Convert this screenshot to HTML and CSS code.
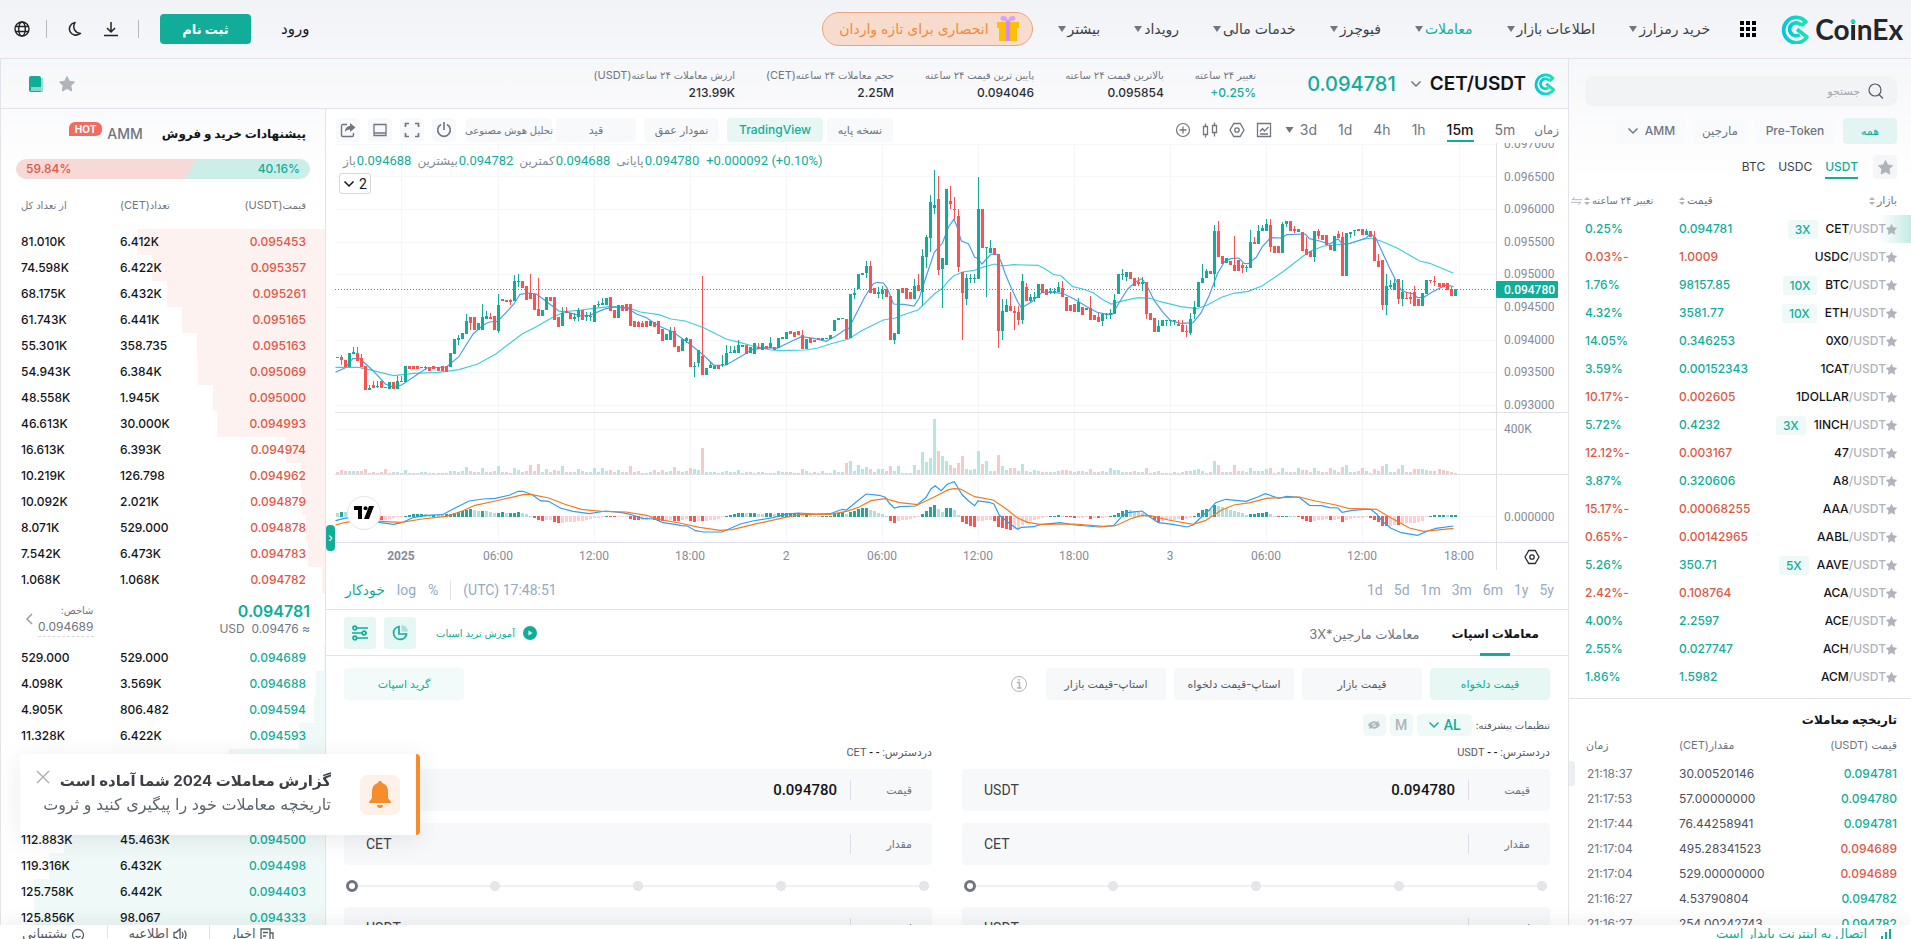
FILE: index.html
```html
<!DOCTYPE html>
<html lang="fa" dir="rtl">
<head>
<meta charset="utf-8">
<title>CET/USDT | CoinEx</title>
<link rel="stylesheet" href="styles.css">
</head>
<body>
<svg class="defs" aria-hidden="true">
  <defs>
    <linearGradient id="brand" x1="0" x2="1"><stop offset="0" stop-color="#00c8dc"/><stop offset="1" stop-color="#1fe0b4"/></linearGradient>
    <symbol id="coin" viewBox="0 0 28 28"><g fill="none" stroke="url(#brand)" stroke-width="3.6" stroke-linejoin="round"><path d="M15.500 13.800 25 21.200A12.200 12.200 0 1 1 24 6.600L19.500 10.300"/><path d="M19.800 10.200A6.300 6.300 0 1 0 18.200 19"/></g></symbol>
    <symbol id="caret" viewBox="0 0 8 6"><path d="M0 0h8L4 6z" fill="currentColor"/></symbol>
    <symbol id="chev" viewBox="0 0 12 8"><path d="M1.500 1.500 6 6l4.500-4.500" fill="none" stroke="currentColor" stroke-width="1.500"/></symbol>
    <symbol id="star" viewBox="0 0 16 16"><path d="M8 .5l2.300 4.700 5.200.8-3.700 3.700.9 5.300L8 12.500 3.300 15l.9-5.300L.5 6l5.200-.8z" fill="currentColor" stroke="currentColor" stroke-linejoin="round"/></symbol>
    <symbol id="sort" viewBox="0 0 6 10"><path d="M0 4h6L3 1zM0 6h6L3 9z" fill="currentColor"/></symbol>
    <symbol id="nut" viewBox="0 0 16 16"><path d="M4.800 1.500h6.400L15 8l-3.800 6.500H4.800L1 8z" fill="none" stroke="currentColor" stroke-width="1.300"/><circle cx="8" cy="8" r="2.200" fill="none" stroke="currentColor" stroke-width="1.300"/></symbol>
  </defs>
</svg>

<header class="top">
  <a class="brand" href="#" dir="ltr"><svg class="brand-mark"><use href="#coin"/></svg><span class="brand-name">Co<b>i</b>nEx</span></a>
  <button class="plain apps" aria-label="برنامه‌ها"><svg width="16" height="16" viewBox="0 0 16 16"><path d="M0 0h4v4H0zM6 0h4v4H6zM12 0h4v4h-4zM0 6h4v4H0zM6 6h4v4H6zM12 6h4v4h-4zM0 12h4v4H0zM6 12h4v4H6zM12 12h4v4h-4z"/></svg></button>
  <nav class="nav">
    <a href="#">خرید رمزارز<svg><use href="#caret"/></svg></a>
    <a href="#">اطلاعات بازار<svg><use href="#caret"/></svg></a>
    <a href="#" class="on">معاملات<svg><use href="#caret"/></svg></a>
    <a href="#">فیوچرز<svg><use href="#caret"/></svg></a>
    <a href="#">خدمات مالی<svg><use href="#caret"/></svg></a>
    <a href="#">رویداد<svg><use href="#caret"/></svg></a>
    <a href="#">بیشتر<svg><use href="#caret"/></svg></a>
  </nav>
  <a class="promo" href="#"><svg width="24" height="28" viewBox="0 0 24 28"><path d="M1 7h22v6H1zM3 13h18v13H3z" fill="#fbbf05"/><path d="M10 6h4v20h-4z" fill="#d08af5"/><path d="M12 6C7 7 3 5 5 2s7 0 7 4c0-4 5-7 7-4s-2 5-7 4z" fill="#d9a2f8"/></svg>انحصاری برای تازه واردان</a>
  <div class="account">
    <a class="login" href="#">ورود</a>
    <button class="signup">ثبت نام</button>
    <i class="bar"></i>
    <button class="plain dl" aria-label="دانلود"><svg width="14" height="16" viewBox="0 0 14 16"><path d="M7 1v10M3 7l4 4 4-4M0 14.500h14" fill="none" stroke="#222" stroke-width="1.500"/></svg></button>
    <button class="plain moon" aria-label="حالت شب"><svg width="14" height="16" viewBox="0 0 14 16"><path d="M7 1.500C2 2.500.5 7 2 10.500s6.500 5 10.500 2C7 12 4 7 7 1.500z" fill="none" stroke="#222" stroke-width="1.500" stroke-linejoin="round"/></svg></button>
    <i class="bar"></i>
    <button class="plain" aria-label="زبان"><svg width="16" height="16" viewBox="0 0 16 16" fill="none" stroke="#222" stroke-width="1.400"><circle cx="8" cy="8" r="7"/><ellipse cx="8" cy="8" rx="3.300" ry="7"/><path d="M1.500 5.500h13M1.500 10.500h13"/></svg></button>
  </div>
</header>

<main class="board">
  <aside class="markets">
    <label class="search"><svg width="16" height="16" viewBox="0 0 16 16" fill="none" stroke="#555b66" stroke-width="1.200"><circle cx="7" cy="7" r="6"/><path d="M11 11.500l4 4"/></svg><input type="text" placeholder="جستجو" aria-label="جستجو"></label>
    <div class="chips">
      <button class="chip on w54">همه</button>
      <button class="chip w80">Pre-Token</button>
      <button class="chip w54">مارجین</button>
      <button class="chip w68">AMM<svg class="chev"><use href="#chev"/></svg></button>
    </div>
    <div class="quotes">
      <button class="fav" aria-label="نشان‌شده‌ها"><svg><use href="#star"/></svg></button>
      <a href="#" class="on">USDT</a><a href="#">USDC</a><a href="#">BTC</a>
    </div>
    <table class="pairs">
      <colgroup><col><col class="c-price"><col class="c-last"></colgroup>
      <thead><tr><th>بازار<svg><use href="#sort"/></svg></th><th>قیمت<svg><use href="#sort"/></svg></th><th>تغییر ۲۴ ساعته<svg><use href="#sort"/></svg><svg class="swap" viewBox="0 0 12 8"><path d="M12 2.500H1M1 2.500 4 0M0 5.500h11M11 5.500 8 8" fill="none" stroke="currentColor"/></svg></th></tr></thead>
      <tbody id="pairs"></tbody>
    </table>
    <section class="history">
      <h2>تاریخچه معاملات</h2>
      <table>
        <colgroup><col><col class="c-price"><col class="c-last"></colgroup>
        <thead><tr><th>قیمت <bdi>(USDT)</bdi></th><th>مقدار<bdi>(CET)</bdi></th><th>زمان</th></tr></thead>
        <tbody id="trades"></tbody>
      </table>
    </section>
    <button class="grip" aria-label="جمع کردن"></button>
  </aside>

  <div class="ticker">
    <svg class="pair-mark"><use href="#coin"/></svg>
    <h1>CET/USDT</h1>
    <svg class="chev lg"><use href="#chev"/></svg>
    <strong class="last">0.094781</strong>
    <dl class="stats">
      <div><dt>تغییر ۲۴ ساعته</dt><dd class="up" dir="ltr">+0.25%</dd></div>
      <div><dt>بالاترین قیمت ۲۴ ساعته</dt><dd>0.095854</dd></div>
      <div><dt>پایین ترین قیمت ۲۴ ساعته</dt><dd>0.094046</dd></div>
      <div><dt>حجم معاملات ۲۴ ساعته<bdi>(CET)</bdi></dt><dd>2.25M</dd></div>
      <div><dt>ارزش معاملات ۲۴ ساعته<bdi>(USDT)</bdi></dt><dd>213.99K</dd></div>
    </dl>
    <div class="marks">
      <svg class="star"><use href="#star"/></svg>
      <svg width="14" height="16" viewBox="0 0 14 16"><path d="M4 2h10v14H4z" fill="#8fe0d8"/><path d="M2 0h8a2 2 0 0 1 2 2v14H2a2 2 0 0 1-2-2V2a2 2 0 0 1 2-2z" fill="#11ad98"/><path d="M2 12h10M2 14h10" stroke="#fff"/></svg>
    </div>
  </div>

  <section class="center">
    <div class="tools">
      <span class="cap">زمان</span>
      <div class="frames"><a href="#">5m</a><a href="#" class="on">15m</a><a href="#">1h</a><a href="#">4h</a><a href="#">1d</a><a href="#">3d</a><svg class="tri"><use href="#caret"/></svg></div>
      <div class="glyphs">
        <svg viewBox="0 0 16 16"><path d="M1.500 1.500h13v13h-13zM4 9.500l2.500-3 2 2.500L12.500 5M4 12h8" fill="none" stroke="currentColor" stroke-width="1.300"/></svg>
        <svg><use href="#nut"/></svg>
        <svg viewBox="0 0 16 16"><path d="M1.500 4.500h4v8h-4zM3.500 1.500v3M3.500 12.500v3M10.500 3.500h4v7h-4zM12.500.5v3M12.500 10.500v4" fill="none" stroke="currentColor" stroke-width="1.300"/></svg>
        <svg viewBox="0 0 16 16"><circle cx="8" cy="8" r="6.500" fill="none" stroke="currentColor" stroke-width="1.200"/><path d="M8 4.500v7M4.500 8h7" stroke="currentColor" stroke-width="1.300"/></svg>
      </div>
      <div class="modes">
        <div class="duo"><button class="mode w66">نسخه پایه</button><button class="mode on w96">TradingView</button></div>
        <button class="mode w75">نمودار عمق</button>
        <div class="duo"><button class="mode w80">قید</button><button class="mode w86">تحلیل هوش مصنوعی</button></div>
        <button class="mode sq" aria-label="خاموش"><svg viewBox="0 0 16 16"><path d="M5 2.500a6.300 6.300 0 1 0 6 0M8 0v8" fill="none" stroke="currentColor" stroke-width="1.600"/></svg></button>
        <button class="mode sq" aria-label="تمام صفحه"><svg viewBox="0 0 16 16"><path d="M1.500 5V1.500H5M11 1.500h3.500V5M14.500 11v3.500H11M5 14.500H1.500V11" fill="none" stroke="currentColor" stroke-width="1.700"/></svg></button>
        <button class="mode sq" aria-label="چیدمان"><svg viewBox="0 0 16 16"><path d="M2 2.500h12v11H2zM2 11h12" fill="none" stroke="currentColor" stroke-width="1.300"/></svg></button>
        <button class="mode sq" aria-label="اشتراک"><svg viewBox="0 0 16 16"><path d="M7 2.500H3a1.500 1.500 0 0 0-1.500 1.500v9A1.500 1.500 0 0 0 3 14.500h9a1.500 1.500 0 0 0 1.500-1.500v-2" fill="none" stroke="currentColor" stroke-width="1.400"/><path d="M10 1l5.500 4.500L10 10V7.500C7.500 7.500 6 8.500 5 10c0-3.500 2-6 5-6z" fill="currentColor"/></svg></button>
      </div>
    </div>

    <div class="chart" dir="ltr">
      <svg id="chart" viewBox="0 0 1233 427" role="img" aria-label="نمودار CET/USDT"></svg>
      <div class="legend"><span>باز<b>0.094688</b></span><span>بیشترین<b>0.094782</b></span><span>کمترین<b>0.094688</b></span><span>پایانی<b>0.094780</b></span><b>+0.000092 (+0.10%)</b></div>
      <button class="fold"><svg class="chev"><use href="#chev"/></svg>2</button>
      <div class="tv"><svg width="20" height="14" viewBox="0 0 20 14"><path d="M0 0h8v13H4V4H0zM15 0h5l-5 13h-5z"/><circle cx="11.500" cy="2.200" r="2"/></svg></div>
      <button class="drawer" aria-label="باز کردن">›</button>
    </div>
    <div class="chart-foot" dir="ltr">
      <div class="scale"><a href="#" class="on">خودکار</a><a href="#">log</a><a href="#">%</a><time>(UTC) 17:48:51</time></div>
      <div class="ranges"><a href="#">1d</a><a href="#">5d</a><a href="#">1m</a><a href="#">3m</a><a href="#">6m</a><a href="#">1y</a><a href="#">5y</a></div>
    </div>

    <div class="trade-tabs">
      <a href="#" class="on">معاملات اسپات</a><a href="#">معاملات مارجین*3X</a>
      <div class="trade-side">
        <a class="learn" href="#"><svg width="14" height="14" viewBox="0 0 14 14"><circle cx="7" cy="7" r="7" fill="#11ad98"/><path d="M5.500 4.500v5L9.500 7z" fill="#fff"/></svg>آموزش ترید اسپات</a>
        <button class="tile" aria-label="نمودار"><svg viewBox="0 0 16 16"><path d="M7 1.500a6.500 6.500 0 1 0 7.500 7.500H7z" fill="none" stroke="#11ad98" stroke-width="1.700"/><path d="M9.500 0A6.500 6.500 0 0 1 16 6.500H9.500z" fill="#a9e0d8"/></svg></button>
        <button class="tile" aria-label="تنظیمات"><svg viewBox="0 0 16 16" fill="none" stroke="#11ad98" stroke-width="1.700"><circle cx="2.800" cy="3" r="1.800"/><path d="M4.500 3H16M0 8h10M13.500 8H15M4.500 13H16"/><circle cx="12" cy="8" r="1.800"/><circle cx="2.800" cy="13" r="1.800"/></svg></button>
      </div>
    </div>

    <div class="orders">
      <div class="kinds">
        <button class="kind on">قیمت دلخواه</button><button class="kind">قیمت بازار</button><button class="kind">استاپ-قیمت دلخواه</button><button class="kind">استاپ-قیمت بازار</button>
        <svg class="info" viewBox="0 0 18 18"><circle cx="9" cy="9" r="7.500" fill="none" stroke="currentColor"/><path d="M7 7.500h2.500V13M7 13h4.500M9 4v1.800" fill="none" stroke="currentColor" stroke-width="1.500"/></svg>
        <button class="kind grid-bot">گرید اسپات</button>
      </div>
      <div class="adv"><span>تنظیمات پیشرفته:</span><button class="al">AL<svg class="chev"><use href="#chev"/></svg></button><button class="sm">M</button><button class="sm" aria-label="پنهان"><svg width="12" height="10" viewBox="0 0 12 10"><path d="M0 5c3-5 9-5 12 0-3 5-9 5-12 0z" fill="#b3b7be"/><circle cx="6" cy="5" r="2" fill="#effaf8"/><path d="M1 8.500 11 1.500" stroke="#b3b7be" stroke-width="1.300"/></svg></button></div>
      <div class="forms">
        <form>
          <p>دردسترس: <b>- -</b> USDT</p>
          <div class="field"><label for="bp">قیمت</label><input id="bp" type="text" value="0.094780"><em>USDT</em></div>
          <div class="field"><label for="bq">مقدار</label><input id="bq" type="text"><em>CET</em></div>
          <input class="slider" dir="ltr" type="range" value="0" aria-label="درصد خرید">
          <div class="field"><label for="bt">ارزش</label><input id="bt" type="text"><em>USDT</em></div>
        </form>
        <form>
          <p>دردسترس: <b>- -</b> CET</p>
          <div class="field"><label for="sp">قیمت</label><input id="sp" type="text" value="0.094780"><em>USDT</em></div>
          <div class="field"><label for="sq">مقدار</label><input id="sq" type="text"><em>CET</em></div>
          <input class="slider" dir="ltr" type="range" value="0" aria-label="درصد فروش">
          <div class="field"><label for="st">ارزش</label><input id="st" type="text"><em>USDT</em></div>
        </form>
      </div>
    </div>
  </section>

  <aside class="book">
    <div class="book-tabs"><a href="#" class="on">پیشنهادات خرید و فروش</a><a href="#">AMM</a><span class="hot">HOT</span></div>
    <div class="ratio" dir="ltr"><span>59.84%</span><span>40.16%</span></div>
    <table class="asks">
      <colgroup><col><col class="b-amt"><col class="b-sum"></colgroup>
      <thead><tr><th>قیمت<bdi>(USDT)</bdi></th><th>تعداد<bdi>(CET)</bdi></th><th>از تعداد کل</th></tr></thead>
      <tbody id="asks"></tbody>
    </table>
    <div class="mid">
      <div class="mid-price"><strong>0.094781</strong><small>≈ 0.09476&nbsp; USD</small></div>
      <div class="mid-index"><small>شاخص:</small><u>0.094689</u></div>
      <svg width="8" height="12" viewBox="0 0 8 12"><path d="M7 1 2 6l5 5" fill="none" stroke="#9a9ea8" stroke-width="1.500"/></svg>
    </div>
    <table class="bids">
      <colgroup><col><col class="b-amt"><col class="b-sum"></colgroup>
      <tbody id="bids"></tbody>
    </table>
  </aside>
</main>

<footer class="status">
  <span class="net"><svg width="14" height="14" viewBox="0 0 14 14"><path d="M0 10h2v4H0zM4 7h2v7H4zM8 3h2v11H8zM12 0h2v14h-2z" fill="#11ad98"/></svg>اتصال به اینترنت پایدار است</span>
  <nav>
    <a href="#"><svg viewBox="0 0 14 14"><path d="M1 1h9v12H1zM10 5h3v8h-4M3 4.500h5M3 8h3" fill="none" stroke="currentColor" stroke-width="1.300"/></svg>اخبار</a>
    <a href="#"><svg viewBox="0 0 14 14"><path d="M1 4.500h2L7 1v12L3 9.500H1zM9 4q2 3 0 6M11.500 2.500q3 4.500 0 9" fill="none" stroke="currentColor" stroke-width="1.300"/></svg>اطلاعیه</a>
    <a href="#"><svg viewBox="0 0 14 14"><circle cx="7" cy="7" r="5.500" fill="none" stroke="currentColor" stroke-width="1.300"/><path d="M4.500 8q2.500 2.500 5 0" fill="none" stroke="currentColor" stroke-width="1.300"/></svg>پشتیبانی</a>
  </nav>
</footer>

<div class="toast" role="status">
  <div class="bell"><svg width="24" height="27" viewBox="0 0 24 27"><path d="M12 0a2 2 0 0 1 2 2c4 1 6 4 6 9v6l3 4v1H1v-1l3-4v-6c0-5 2-8 6-9a2 2 0 0 1 2-2zM9 24h6a3 3 0 0 1-6 0z" fill="#f78c2d"/></svg></div>
  <div class="toast-text"><h3>گزارش معاملات 2024 شما آماده است</h3><p>تاریخچه معاملات خود را پیگیری کنید و ثروت</p></div>
  <button class="plain close" aria-label="بستن"><svg width="14" height="14" viewBox="0 0 14 14"><path d="M1 1l12 12M13 1 1 13" stroke="#a9acb2" stroke-width="1.400"/></svg></button>
</div>
<script src="app.js"></script>
</body>
</html>
```
FILE: styles.css
```css
* { box-sizing: border-box; }
:root {
  --teal: #11ad98; --red: #de5846; --ink: #121418; --gray: #70757f; --mute: #b0b3ba; --line: #e3e4ea;
}
body {
  margin: 0; height: 100vh; overflow: hidden; display: grid; grid-template-rows: 59px 1fr 14px;
  background: linear-gradient(#f2f3f7, #fff 180px);
  font: 12px/16px Inter, "DejaVu Sans", sans-serif; color: var(--ink);
}
a { color: inherit; text-decoration: none; }
button, input { font: inherit; color: inherit; }
button { border: 0; padding: 0; background: none; cursor: pointer; }
h1, h2, h3, p, dl, dd { margin: 0; }
table { border-collapse: collapse; table-layout: fixed; width: 100%; }
th { font-weight: 400; color: var(--gray); padding: 0; text-align: right; }
td { padding: 0; }
bdi { font-size: 11px; }
.defs { position: absolute; width: 0; height: 0; }
.plain { display: flex; align-items: center; }
.chev { width: 12px; height: 8px; flex: none; }
.up { color: var(--teal); }
.down { color: var(--red); }

/* header */
.top { display: flex; align-items: center; padding: 0 8px 0 14px; border-bottom: 1px solid var(--line); }
.brand { display: flex; align-items: center; gap: 5px; }
.brand-mark { width: 29px; height: 29px; }
.brand-name { font: 700 28px/32px Lato, sans-serif; color: #23262b; }
.brand-name b { background: linear-gradient(#1fd8c0 32%, #23262b 32%); -webkit-background-clip: text; background-clip: text; color: transparent; }
.apps { margin-right: 25px; }
.nav { display: flex; gap: 34px; margin-right: 30px; font-size: 14px; line-height: 24px; color: #3c3f46; }
.nav a { display: flex; align-items: center; gap: 2px; }
.nav svg { width: 8px; height: 6px; color: #70757f; }
.nav .on { color: var(--teal); }
.promo { display: flex; align-items: center; gap: 7px; height: 34px; margin-right: 25px; padding: 0 12px 0 16px; border: 1px solid #eda47d; border-radius: 17px; background: #f7dccd; color: #f28a3c; font-size: 14px; }
.account { display: flex; align-items: center; margin-right: auto; }
.login { font-size: 15px; }
.signup { width: 91px; height: 30px; margin: 0 30px 0 21px; border-radius: 4px; background: var(--teal); color: #fff; font-weight: 700; font-size: 13px; }
.bar { width: 1px; height: 18px; background: #b5b8bf; }
.dl { margin: 0 20px 0 22px; }
.moon { margin-left: 21px; }
.account .bar:last-of-type { margin-left: 16px; }

/* frame */
.board { display: grid; grid-template-columns: 343px 1fr 326px; grid-template-rows: 50px 1fr; min-height: 0; overflow: hidden; }
.markets { grid-row: 1 / 3; grid-column: 1; position: relative; border-left: 1px solid var(--line); min-height: 0; overflow: hidden; }
.ticker { grid-column: 2 / 4; border-bottom: 1px solid var(--line); border-left: 1px solid var(--line); display: flex; align-items: center; padding: 0 12px 0 28px; }
.center { grid-column: 2; min-height: 0; min-width: 0; overflow: hidden; background: #fff; }
.book { grid-column: 3; border-left: 1px solid var(--line); border-right: 1px solid var(--line); overflow: hidden; }

/* ticker */
.pair-mark { width: 22px; height: 22px; }
.ticker h1 { font-size: 19px; font-weight: 600; line-height: 24px; margin: 0 8px; }
.chev.lg { color: #70757f; }
.last { font-size: 20px; font-weight: 500; line-height: 24px; color: var(--teal); margin-right: 14px; }
.stats { display: flex; gap: 31px; margin-right: 51px; color: var(--gray); }
.stats dt { font-size: 10px; line-height: 17px; }
.stats dd { line-height: 17px; color: #2b2e35; font-weight: 500; text-align: right; }
.stats dd.up { color: var(--teal); }
.marks { display: flex; gap: 16px; margin-right: auto; color: var(--mute); }
.star { width: 16px; height: 16px; }

/* markets */
.search { display: flex; align-items: center; gap: 6px; height: 30px; margin: 17px 14px 12px 16px; padding: 0 13px; border-radius: 8px; background: #f2f3f5; }
.search input { flex: 1; min-width: 0; border: 0; background: none; outline: 0; font-size: 11px; }
.search input::placeholder { color: #a3a7af; }
.chips { display: flex; gap: 8px; padding-right: 14px; }
.chip { height: 26px; border-radius: 4px; background: #f9fafc; color: var(--gray); font-weight: 500; font-size: 12px; display: flex; align-items: center; justify-content: center; gap: 6px; }
.chip.on { background: #e3f5f2; color: var(--teal); font-size: 11px; }
.w54 { width: 54px; } .w80 { width: 80px; } .w68 { width: 68px; } .w66 { width: 66px; } .w96 { width: 96px; } .w75 { width: 75px; } .w86 { width: 86px; }
.quotes { display: flex; gap: 13px; padding: 11px 14px 0 0; color: #3c3f46; }
.quotes a { line-height: 24px; height: 24px; }
.quotes .on { color: var(--teal); border-bottom: 2px solid; font-weight: 500; }
.fav { width: 24px; height: 24px; margin-left: 2px; border-radius: 4px; background: #f5f6f8; color: var(--mute); display: grid; place-items: center; }
.fav svg { width: 15px; height: 15px; }
.c-price { width: 118px; } .c-last { width: 110px; }
.markets th, .markets td { text-align: left; }
.markets th:first-child, .markets td:first-child { text-align: right; padding-right: 14px; }
.markets td:last-child { padding-left: 16px; }
.markets th { font-size: 11px; padding-bottom: 3px; }
.pairs { margin-top: 8px; }
.pairs th { height: 28px; white-space: nowrap; }
.pairs th svg { width: 6px; height: 10px; margin-right: 2px; color: var(--mute); vertical-align: middle; }
.pairs th .swap { width: 11px; height: 8px; }
.pairs th:last-child { padding-left: 2px; font-size: 10px; }
.pairs td { height: 28px; font-weight: 500; }
.pairs tr:first-child td:first-child { background: linear-gradient(to left, #c5ebe5, transparent 32px); }
.pair { display: flex; align-items: center; }
.pair svg { width: 11px; height: 11px; flex: none; color: var(--mute); }
.pair i { font-style: normal; color: var(--mute); }
.lev { margin-right: 8px; padding: 0 7px; line-height: 19px; border-radius: 3px; background: #eff9f7; color: var(--teal); }
.history { margin-top: 7px; border-top: 1px solid var(--line); padding-top: 10px; }
.history h2 { font-size: 12px; line-height: 22px; padding-right: 14px; }
.history th { height: 30px; }
.history th:last-child { padding-left: 17px; }
.history td { height: 25px; color: #4c5059; }
.history td:first-child { font-weight: 500; }
.history td.up { color: var(--teal); } .history td.down { color: var(--red); }
.history td:last-child { color: var(--gray); padding-left: 18px; }
.grip { position: absolute; left: 0; top: 702px; width: 6px; height: 25px; border-radius: 0 3px 3px 0; background: #eceef0; }

/* chart toolbar */
.tools { display: flex; align-items: center; height: 34px; padding: 8px 9px 0 10px; color: var(--gray); }
.cap { font-size: 12px; }
.frames { display: flex; align-items: center; gap: 21px; margin-right: 19px; font-size: 14px; }
.frames a { height: 24px; line-height: 24px; }
.frames .on { color: var(--ink); border-bottom: 2px solid var(--teal); font-weight: 500; }
.tri { width: 9px; height: 6px; margin-right: -15px; }
.glyphs { display: flex; gap: 11px; margin-right: 13px; }
.glyphs svg, .sq svg { width: 16px; height: 16px; }
.modes { display: flex; gap: 8px; margin-right: auto; }
.duo { display: flex; gap: 4px; }
.duo:nth-child(3) { margin-left: 2px; }
.mode { height: 24px; border-radius: 4px; background: #f8f9fb; font-size: 11px; white-space: nowrap; display: flex; align-items: center; justify-content: center; }
.mode.w86 { font-size: 10px; }
.mode.on { background: #e7f7f4; color: var(--teal); font-size: 12px; font-weight: 500; }
.sq { width: 24px; }

/* chart */
.chart { position: relative; padding-left: 9px; }
.chart > svg { display: block; width: 100%; height: auto; }
.chart text { font: 12px Roboto, sans-serif; fill: #868b98; }
.chart text.bold { font-weight: 700; }
.chart text.tag { fill: #fff; font-weight: 500; }
.legend { position: absolute; left: 17px; top: 9px; display: flex; gap: 6px; font: 13px/18px Roboto, "DejaVu Sans", sans-serif; color: #868b98; white-space: nowrap; }
.legend span { font-size: 12px; }
.legend b { font-weight: 400; font-size: 13px; color: var(--teal); margin-left: 1px; unicode-bidi: isolate; }
.legend span b { display: inline-block; }
.fold { position: absolute; left: 13px; top: 30px; width: 32px; height: 21px; border: 1px solid #d6d8de; border-radius: 3px; background: #fff; font: 14px Roboto, sans-serif; display: flex; align-items: center; justify-content: center; gap: 4px; }
.tv { position: absolute; left: 21px; top: 353px; width: 34px; height: 34px; border: 1px solid var(--line); border-radius: 50%; background: #fff; display: grid; place-items: center; }
.drawer { position: absolute; left: 0; top: 382px; width: 9px; height: 26px; border-radius: 4px; background: var(--teal); color: #fff; line-height: 20px; }
.chart-foot { display: flex; justify-content: space-between; align-items: center; height: 40px; padding: 0 14px 0 19px; border-bottom: 1px solid var(--line); font: 14px/20px Roboto, "DejaVu Sans", sans-serif; color: #94abc2; }
.scale { display: flex; gap: 12px; }
.ranges { display: flex; gap: 11px; }
.scale .on { color: var(--teal); }
.scale time { border-left: 1px solid var(--line); padding-left: 12px; }

/* trade panel */
.trade-tabs { display: flex; align-items: center; gap: 32px; height: 46px; padding: 0 29px 0 18px; border-bottom: 1px solid var(--line); color: var(--gray); font-size: 13px; }
.trade-tabs > a { line-height: 48px; height: 46px; }
.trade-tabs > .on { color: var(--ink); font-size: 12px; font-weight: 700; background: linear-gradient(var(--teal), var(--teal)) 50% 100% / 30px 3px no-repeat; }
.trade-side { display: flex; align-items: center; gap: 8px; margin-right: auto; }
.learn { display: flex; align-items: center; gap: 8px; margin-left: 12px; font-size: 10px; color: var(--teal); }
.tile { width: 32px; height: 32px; border-radius: 4px; background: #e7f7f4; display: grid; place-items: center; }
.tile svg { width: 16px; height: 16px; }
.orders { padding: 12px 18px 0; }
.kinds { display: flex; align-items: center; gap: 8px; }
.kind { width: 120px; height: 32px; border-radius: 4px; background: #f7f8fa; color: #555b66; font-size: 11px; }
.kind.on { background: #e7f7f4; color: var(--teal); }
.info { width: 18px; height: 18px; margin-right: 10px; color: var(--mute); }
.grid-bot { margin-right: auto; background: #f2fbf9; color: var(--teal); }
.adv { display: flex; gap: 4px; margin-top: 14px; line-height: 22px; color: #555b66; font-size: 10px; }
.al { height: 22px; width: 55px; border-radius: 4px; background: #effaf8; color: var(--teal); font: 500 14px Roboto, sans-serif; display: flex; align-items: center; justify-content: center; gap: 4px; }
.sm { width: 23px; height: 22px; border-radius: 4px; background: #effaf8; color: var(--mute); font: 500 14px Roboto, sans-serif; display: grid; place-items: center; }
.forms { display: grid; grid-template-columns: 1fr 1fr; gap: 30px; margin-top: 8px; }
.forms form { display: flex; flex-direction: column; min-width: 0; }
.forms p { margin-bottom: 7px; color: #555b66; font: 11px/18px Roboto, "DejaVu Sans", sans-serif; }
.forms p b { font-weight: 500; color: var(--ink); }
.field { display: flex; align-items: center; height: 42px; margin-bottom: 12px; padding: 0 20px 0 22px; border-radius: 4px; background: #f7f8fa; font: 15px Roboto, "DejaVu Sans", sans-serif; }
.field label { width: 61px; font-size: 11px; color: var(--gray); }
.field input { flex: 1; min-width: 0; height: 20px; border: 0; border-right: 1px solid #dcdee3; padding: 0 13px 0 0; background: none; font-weight: 500; outline: 0; }
.field em { font-style: normal; font-size: 14px; color: #3c3f46; }
.slider { appearance: none; height: 12px; margin: 3px 2px 15px; padding: 0 1px; outline: 0;
  background: radial-gradient(circle, #e4e6ea 5px, transparent 5px) 0 50% / 10px 10px no-repeat content-box,
    radial-gradient(circle, #e4e6ea 5px, transparent 5px) 25% 50% / 10px 10px no-repeat content-box,
    radial-gradient(circle, #e4e6ea 5px, transparent 5px) 50% 50% / 10px 10px no-repeat content-box,
    radial-gradient(circle, #e4e6ea 5px, transparent 5px) 75% 50% / 10px 10px no-repeat content-box,
    radial-gradient(circle, #e4e6ea 5px, transparent 5px) 100% 50% / 10px 10px no-repeat content-box,
    linear-gradient(#f0f1f4, #f0f1f4) 50% 50% / 98% 2px no-repeat; }
.slider::-webkit-slider-thumb { appearance: none; width: 12px; height: 12px; margin-left: -1px; border: 3px solid #70757f; border-radius: 50%; background: #fff; }

/* order book */
.book-tabs { display: flex; align-items: center; height: 50px; padding: 0 19px 0 0; }
.book-tabs a { font-size: 14px; font-weight: 500; color: var(--gray); }
.book-tabs .on { font-weight: 700; font-size: 12px; color: var(--ink); margin-left: 19px; }
.hot { align-self: flex-start; margin: 13px 5px 0 0; padding: 0 6px; border-radius: 6px 6px 6px 0; background: #f26b5e; color: #fff; font-size: 10px; font-weight: 700; line-height: 14px; }
.ratio { display: flex; justify-content: space-between; height: 20px; margin: 0 15px; padding: 0 10px; border-radius: 10px; line-height: 20px; font-weight: 500; background: linear-gradient(118deg, #f7dad7 59%, #cdeee8 59%); }
.ratio span:first-child { color: var(--red); } .ratio span:last-child { color: var(--teal); }
.b-amt { width: 86px; } .b-sum { width: 119px; }
.book th, .book td { text-align: left; height: 26px; }
.book th { height: 50px; font-size: 10px; padding-top: 2px; }
.book td { font-weight: 500; }
.book tr > :first-child { text-align: right; padding-right: 19px; }
.book tr > :last-child { padding-left: 20px; }
.asks td:first-child { color: var(--red); } .bids td:first-child { color: var(--teal); }
.asks tbody tr { background: linear-gradient(to left, #fef2f0 var(--depth), transparent 0); }
.bids tr { background: linear-gradient(to left, #eff9f7 var(--depth), transparent 0); }
.mid { display: flex; align-items: center; height: 52px; padding: 0 15px 0 24px; color: var(--gray); }
.mid strong { display: block; font-size: 16px; line-height: 20px; font-weight: 600; color: var(--teal); }
.mid small { display: block; font-size: 12px; line-height: 16px; }
.mid-index { margin: 0 auto 0 5px; }
.mid-index small { font-size: 10px; }
.mid-index u { display: block; line-height: 18px; text-decoration: none; border-bottom: 1px dashed #d6d8de; }

/* footer */
.status { position: relative; display: flex; align-items: flex-start; justify-content: space-between; padding: 0 20px 0 22px; background: #fff; overflow: hidden; box-shadow: 0 -4px 16px rgba(40, 50, 70, .08); color: #555b66; }
.net { display: flex; gap: 10px; color: var(--teal); font-size: 13px; }
.net svg { margin-top: 4px; }
.status nav { display: flex; font-size: 13px; }
.status nav a { display: flex; gap: 4px; }
.status nav a + a { margin-right: 20px; padding-right: 22px; border-right: 1px solid var(--line); }
.status nav svg { width: 14px; height: 14px; margin-top: 3px; }

/* notice */
.toast { position: fixed; left: 20px; bottom: 104px; width: 400px; height: 81px; display: flex; align-items: center; padding: 0 16px; background: #fff; border-right: 4px solid #f78c2d; border-radius: 4px; box-shadow: 0 4px 24px rgba(40, 50, 70, .1); }
.bell { width: 40px; height: 40px; border-radius: 8px; background: #fef1e7; display: grid; place-items: center; }
.toast-text { margin-right: 29px; padding-bottom: 4px; white-space: nowrap; color: #3c3f46; }
.toast h3 { font-size: 15px; line-height: 24px; }
.toast p { font-size: 16px; line-height: 23px; color: #60646d; }
.close { position: absolute; left: 16px; top: 16px; }
```
FILE: app.js
```js
const up = 'up', down = 'down';
const el = id => document.getElementById(id);

const pairs = [
  ['CET', '3X', '0.094781', '0.25%'], ['USDC', '', '1.0009', '-0.03%'], ['BTC', '10X', '98157.85', '1.76%'],
  ['ETH', '10X', '3581.77', '4.32%'], ['0X0', '', '0.346253', '14.05%'], ['1CAT', '', '0.00152343', '3.59%'],
  ['1DOLLAR', '', '0.002605', '-10.17%'], ['1INCH', '3X', '0.4232', '5.72%'], ['47', '', '0.003167', '-12.12%'],
  ['A8', '', '0.320606', '3.87%'], ['AAA', '', '0.00068255', '-15.17%'], ['AABL', '', '0.00142965', '-0.65%'],
  ['AAVE', '5X', '350.71', '5.26%'], ['ACA', '', '0.108764', '-2.42%'], ['ACE', '', '2.2597', '4.00%'],
  ['ACH', '', '0.027747', '2.55%'], ['ACM', '', '1.5982', '1.86%']
];
el('pairs').innerHTML = pairs.map(([n, lev, p, c]) => {
  const d = c[0] === '-' ? down : up;
  return `<tr><td><span class="pair"><svg><use href="#star"/></svg><span dir="ltr">${n}<i>/USDT</i></span>${lev ? `<span class="lev">${lev}</span>` : ''}</span></td><td class="${d}">${p}</td><td class="${d}">${c}</td></tr>`;
}).join('');

const trades = [
  ['0.094781', '30.00520146', '21:18:37', up], ['0.094780', '57.00000000', '21:17:53', up],
  ['0.094781', '76.44258941', '21:17:44', up], ['0.094689', '495.28341523', '21:17:04', down],
  ['0.094689', '529.00000000', '21:17:04', down], ['0.094782', '4.53790804', '21:16:27', up],
  ['0.094782', '254.00242743', '21:16:27', up]
];
el('trades').innerHTML = trades.map(([p, a, t, d]) => `<tr><td class="${d}">${p}</td><td>${a}</td><td>${t}</td></tr>`).join('');

const asks = [
  ['0.095453', '6.412K', '81.010K'], ['0.095357', '6.422K', '74.598K'], ['0.095261', '6.432K', '68.175K'],
  ['0.095165', '6.441K', '61.743K'], ['0.095163', '358.735', '55.301K'], ['0.095069', '6.384K', '54.943K'],
  ['0.095000', '1.945K', '48.558K'], ['0.094993', '30.000K', '46.613K'], ['0.094974', '6.393K', '16.613K'],
  ['0.094962', '126.798', '10.219K'], ['0.094879', '2.021K', '10.092K'], ['0.094878', '529.000', '8.071K'],
  ['0.094783', '6.473K', '7.542K'], ['0.094782', '1.068K', '1.068K']
];
const bids = [
  ['0.094689', '529.000', '529.000'], ['0.094688', '3.569K', '4.098K'], ['0.094594', '806.482', '4.905K'],
  ['0.094593', '6.422K', '11.328K'], ['0.094592', '30.000K', '41.328K'], ['0.094562', '19.660K', '60.988K'],
  ['0.094501', '6.432K', '67.420K'], ['0.094500', '45.463K', '112.883K'], ['0.094498', '6.432K', '119.316K'],
  ['0.094403', '6.442K', '125.758K'], ['0.094333', '98.067', '125.856K']
];
const FULL_DEPTH = 140;
const bookRows = rows => rows.map(([p, a, s]) => {
  const k = s.endsWith('K') ? parseFloat(s) : parseFloat(s) / 1000;
  return `<tr style="--depth:${(k / FULL_DEPTH * 100).toFixed(1)}%"><td>${p}</td><td>${a}</td><td>${s}</td></tr>`;
}).join('');
el('asks').innerHTML = bookRows(asks);
el('bids').innerHTML = bookRows(bids);

/* Each candle: colour, body top, body bottom [, wick top, wick bottom]; larger numbers are lower prices. */
const candles = `r681,684 r682,691,674,706 r690,711 g670,711 g667,671,650,671 r670,692,650,692 r684,712,672,712 r708,780
g773,780,765,780 r765,775,753,775 g768,771,753,775 r754,774 r771,774 g757,777 r757,777 g752,777,738,777 g752,755,738,755
g709,756 r708,717 r709,717 r708,717 g711,715 g711,714,708,720 r712,722 r709,716 r710,723 r709,724 r709,726 g669,711 g627,671
g624,630,615,645 g609,628 g573,611,551,611 r561,578,561,600 r562,599 g578,600 g561,599,521,599 g558,567,543,567 r560,567,548,567
r558,600 g525,602,491,608 r508,512 r510,517 r511,517,508,526 g453,514,434,514 g452,456,432,470 r453,474 r467,510 r490,508,432,508
r493,540 r538,557,444,557 g540,558 g502,540 r502,514 r502,570 r562,591 g549,587,531,587 r543,550,532,550 r549,567 g560,566,550,572
g540,562,533,572 r541,570 g555,562,547,573 g558,562,547,573 g524,575 g521,525,513,530 g519,525,503,525 g505,524 r502,543 r541,563
g525,563 r525,542 r522,543 r522,587 r572,590 r575,590,572,590 r580,590,572,590 r573,590 g573,589 r575,590 r573,611 r597,632 g611,630
g603,630,592,630 r603,651,590,651 r648,665 g628,662 g624,632,620,640 r626,710 g708,711,695,741 g660,698,660,711 r678,735,437,735
g714,735 g706,715,697,715 g708,716 r704,716 g702,705,675,712 g669,704,645,704 g666,670,647,670 g661,668,649,668 g645,668,630,668
g646,650 r646,672 g652,668 g640,672 r652,658,640,658 g640,660 r648,658 g640,655,622,655 r650,660 g624,655 g622,628 g607,627 r604,612
r605,620 r604,616 r615,656,600,656 g628,657 r625,640 r630,636 r624,630 g624,630 g624,628 g614,628 g570,604 g565,570 g564,567 r566,628
g492,625 g488,494,475,508 g432,476 g430,434 g408,430,392,444 r408,490,393,490 r474,491 g486,492,470,504 g479,491,467,507 r478,500
r497,630 g609,630,609,641 g478,612 r474,490 r474,507 r486,507 g468,508,448,508 r465,482,432,482 g378,486,356,528 g320,380,316,413
g216,324,195,366 g225,235,120,252 r207,420,138,434 g384,417,384,534 g177,404 r213,221,168,236 r237,240,201,270 r258,412,237,425
r426,489,426,630 g444,508,432,525 g443,448,432,460 g444,447,432,460 g237,447,141,447 r237,354 g352,355,352,500 g353,370,330,370
r354,374 r372,603,372,654 g543,602,508,630 g525,545,508,545 r528,542,485,542 r543,548,528,600 r546,570,528,584 g453,570,432,581
r470,512,458,512 g500,512,492,516 g502,506,485,516 g462,504 r463,490 r476,495 g483,487,473,493 g484,487,473,493 g472,486,455,486
r473,502,452,502 r500,542 r524,542 r522,546 g516,546,505,546 r532,555 g535,540 r535,570,498,570 r555,570 r562,575,549,575
g553,573,550,588 g552,556,550,568 g550,556,537,568 g510,552,492,552 g432,493 g432,435,417,450 g427,440,427,453 r427,448 r444,467
r456,462,440,468 g456,462,441,482 r457,553,457,567 r550,570 r564,605 g588,605,570,605 g570,587 g570,573,570,588 g571,574,570,588
g570,573,570,586 r583,588,570,588 r586,606,570,606 r603,607,585,620 g568,608,549,614 g532,551,513,567 g457,532 g444,458,403,458
g423,444,417,444 r424,433 g303,432,285,470 r303,380,272,380 r377,403 g385,400 r392,404 r405,422,318,422 r390,422 r405,414,400,428
g410,414,405,427 g336,413,300,413 r336,341,320,341 g304,341,286,341 g293,303,284,303 g282,304,268,304 r285,350,268,365 r348,369
r348,369 g282,368,275,368 g273,283,273,292 r273,304 r297,303,288,310 g297,306 r307,363 r358,375,320,375 r362,381 g303,381,303,395
r303,317,297,327 r316,330 r316,344 r345,361 g317,364 r313,324,304,324 r322,437,305,437 g310,438 g305,312,305,325 g300,304,300,318
r298,302 r298,314 g303,315,297,315 r303,320 r320,393,303,393 r392,410,372,410 r391,525,391,540 g467,525,432,555 g465,470,450,478
g460,479,447,479 r447,508,447,522 g486,507,450,528 r503,506,486,508 r500,508,485,522 r486,527,467,527 r507,528 g488,528 g450,492
r450,453,450,460 r453,456,438,468 r458,471 r459,472 r458,480 r478,498,470,498 g478,497`.split(/\s+/)
  .map(s => ({ c: s[0], v: s.slice(1).split(',').map(Number) }));

const volume = [6,12,9,9,9,9,9,15,3,6,3,6,15,3,6,6,3,12,3,3,3,6,6,3,3,3,3,3,9,9,6,9,21,9,6,6,18,6,6,9,24,6,6,3,18,12,6,9,27,9,30,6,15,6,12,9,24,6,6,6,15,9,6,6,18,6,18,9,12,6,12,6,6,24,6,9,3,3,6,12,6,12,6,9,21,9,6,9,18,15,12,78,6,6,6,3,6,9,6,6,12,3,6,6,3,6,6,3,3,3,9,6,6,6,3,3,15,9,3,6,3,9,3,3,12,6,6,33,39,9,27,15,21,15,6,15,15,9,24,9,24,3,3,3,27,12,66,36,48,165,69,54,39,27,18,33,54,15,12,15,69,30,39,9,9,57,24,12,18,18,9,30,9,6,12,9,6,6,6,6,9,12,12,9,6,9,9,6,15,6,6,9,6,18,12,12,6,6,6,9,6,6,18,3,6,9,3,3,3,6,3,6,9,9,12,15,9,3,6,39,27,6,6,6,27,9,9,6,18,9,9,9,15,18,3,6,18,6,6,6,18,12,12,6,18,9,6,6,18,12,6,21,27,6,6,9,18,9,3,15,9,24,30,6,6,15,27,6,6,15,15,15,12,9,9,15,12,9,6,3];
const hist = [12,15,14,12,9,6,3,-3,-6,-9,-11,-12,-12,-9,-6,-4,-3,4,7,9,9,9,8,7,7,6,5,9,9,12,15,18,21,24,21,18,18,17,15,12,12,14,12,12,13,15,12,9,3,-6,-12,-14,-12,-12,-18,-20,-20,-18,-18,-17,-14,-14,-12,-9,-7,-5,-4,2,-2,-4,-4,-4,-4,-9,-11,-12,-12,-11,-10,-12,-14,-15,-15,-13,-15,-16,-12,-10,-14,-18,-14,-16,-15,-13,-11,-8,-4,3,6,8,11,12,11,12,12,10,8,11,12,10,11,12,12,12,12,12,8,8,6,4,3,3,3,3,8,12,15,9,14,17,24,27,28,22,17,12,8,3,-14,-22,-14,-11,-11,-9,-6,-3,8,18,30,36,24,15,26,27,21,5,-18,-24,-30,-33,-15,-15,-12,-12,-14,-33,-36,-39,-42,-39,-38,-27,-20,-15,-12,-9,-6,-4,3,4,5,4,-2,-4,-5,-5,-5,-4,-8,-5,-7,-5,-3,3,6,12,18,21,20,17,14,12,6,-3,-12,-18,-14,-12,-11,-11,-10,-11,-10,-6,4,12,20,25,24,37,33,30,26,21,18,15,12,6,9,10,12,12,15,10,4,-4,3,4,3,2,-3,-9,-15,-17,-14,-12,-11,-10,-13,-11,-10,-17,-12,-9,-7,-6,-5,-4,-6,-12,-18,-29,-30,-30,-27,-28,-24,-21,-21,-20,-18,-15,-4,3,6,7,7,6,6,7];

/* Line series: x,y pairs on a 2.45 by 3 units-per-pixel grid. */
const fastMA = '38,727 62,713 80,686 98,686 130,722 160,762 180,772 200,765 240,732 262,714 310,711 340,680 375,612 400,585 415,576 435,574 460,542 475,522 490,493 512,489 530,492 550,510 585,543 610,548 640,558 660,556 700,536 725,531 755,536 775,552 800,563 830,588 865,606 905,641 940,676 965,706 995,705 1030,680 1060,658 1090,653 1120,655 1145,640 1180,620 1210,625 1240,634 1265,617 1285,600 1295,596 1315,548 1335,500 1355,462 1365,457 1380,459 1390,475 1405,522 1430,523 1455,528 1468,505 1485,440 1505,367 1517,350 1525,340 1540,290 1553,268 1561,290 1571,332 1589,342 1604,382 1611,385 1622,402 1644,372 1659,373 1669,395 1679,432 1694,475 1709,515 1719,534 1744,515 1769,487 1794,487 1819,490 1849,508 1879,530 1904,547 1919,551 1941,554 1959,515 1979,477 1999,455 2014,446 2024,463 2044,512 2064,545 2084,572 2109,580 2139,578 2159,548 2179,495 2199,430 2216,395 2231,386 2251,384 2264,400 2274,401 2294,382 2309,350 2329,323 2354,324 2369,314 2414,312 2424,326 2449,333 2474,342 2494,326 2504,341 2519,342 2544,332 2564,323 2574,310 2587,325 2599,357 2619,410 2634,447 2649,480 2664,488 2679,492 2689,503 2704,502 2724,487 2759,465 2777,470';
const slowMA = '38,712 95,712 130,722 180,737 230,730 290,727 340,719 385,703 430,673 470,635 495,612 530,590 570,562 600,545 640,540 670,535 715,529 755,533 785,546 830,554 860,567 895,573 940,593 995,627 1030,638 1060,648 1105,660 1130,662 1190,660 1220,654 1250,642 1295,627 1330,600 1380,570 1410,564 1435,552 1465,540 1505,492 1525,475 1540,452 1553,437 1574,426 1599,422 1629,410 1654,402 1671,408 1699,404 1759,406 1774,415 1796,433 1816,438 1844,470 1869,477 1894,488 1919,510 1939,522 1969,512 2004,503 2034,505 2059,515 2109,530 2149,536 2174,525 2209,502 2239,490 2274,484 2309,467 2359,425 2409,378 2429,362 2459,348 2519,341 2549,330 2574,324 2599,333 2639,354 2694,393 2719,400 2777,430';
const macd = '38,362 60,355 90,350 120,360 148,368 180,373 200,368 230,352 260,346 300,344 330,325 365,303 400,297 430,295 465,285 485,274 497,274 520,284 540,302 560,304 590,325 620,334 660,341 700,333 740,338 760,343 790,355 820,357 840,368 870,373 885,377 900,378 920,392 940,396 985,396 1030,372 1060,363 1110,353 1140,343 1170,339 1215,342 1250,341 1280,328 1290,330 1310,310 1338,282 1370,286 1385,292 1395,310 1407,324 1420,320 1460,318 1485,292 1497,267 1507,257 1522,272 1537,253 1554,245 1574,285 1589,303 1604,317 1612,303 1639,307 1651,312 1664,345 1684,365 1709,388 1719,382 1749,380 1764,374 1814,368 1849,375 1909,381 1944,377 1964,350 1979,338 2014,333 2034,352 2054,368 2089,373 2124,381 2139,375 2164,345 2179,330 2194,308 2219,298 2269,304 2299,290 2316,281 2349,295 2369,289 2399,292 2424,316 2454,317 2474,323 2494,324 2504,337 2529,331 2559,328 2574,328 2589,342 2604,365 2624,385 2649,398 2689,406 2714,393 2734,385 2777,378';
const signal = '38,375 60,368 100,360 148,364 200,367 250,357 310,349 350,332 380,316 430,303 470,292 500,283 520,284 560,294 600,313 640,328 690,334 750,336 800,346 830,358 880,369 930,382 980,391 1010,389 1070,371 1140,352 1180,343 1250,343 1290,334 1320,322 1350,302 1385,296 1420,308 1465,314 1500,294 1540,269 1554,266 1569,267 1604,290 1649,300 1679,325 1709,354 1734,367 1764,373 1849,372 1919,379 1949,377 1989,355 2014,346 2034,347 2079,360 2139,373 2169,362 2209,330 2239,315 2279,308 2319,295 2399,291 2439,303 2489,315 2519,325 2589,328 2619,350 2669,384 2704,394 2777,385';

const AXIS = 1161, W = 1233;
const x = k => Math.round(2.4 + 4.004 * k);
const y = v => Math.round(v / 3 - 13);
const out = [];
const rect = (l, t, w, h, f) => out.push(`<rect x="${l}" y="${t}" width="${w}" height="${Math.max(h, 1)}" fill="${f}"/>`);
const line = (pts, top, color) => out.push(`<polyline fill="none" stroke="${color}" stroke-width="1.2" points="${pts.split(' ').map(p => {
  const [a, b] = p.split(',').map(Number);
  return (a / 2.45 - 15).toFixed(1) + ',' + (b / 3 + top).toFixed(1);
}).join(' ')}"/>`);
const text = (tx, ty, s, cls, anchor) => out.push(`<text x="${tx}" y="${ty}" class="${cls || ''}" text-anchor="${anchor || 'start'}">${s}</text>`);

[1, 33, 66, 99, 131, 164, 197, 229, 262, 286, 373].forEach(g => rect(0, g, AXIS, 1, '#f5f6f8'));
['2025', '06:00', '12:00', '18:00', '2', '06:00', '12:00', '18:00', '3', '06:00', '12:00', '18:00'].forEach((s, i) => {
  const gx = x(16 + 24 * i);
  rect(gx, 0, 1, 399, '#f5f6f8');
  text(gx, 417, s, i ? '' : 'bold', 'middle');
});
[269, 331, 399].forEach(g => rect(0, g, W, 1, '#dfe0ea'));
rect(AXIS, 0, 1, 427, '#dfe0e6');

candles.forEach(({ c }, k) => {
  const h = Math.round(volume[k] / 3);
  rect(x(k) - 1, 331 - h, 3, h, c === 'g' ? '#b5e6df' : '#f3cbc7');
});
hist.forEach((v, k) => {
  const rising = k && v >= hist[k - 1], h = Math.round(Math.abs(v) / 3);
  const f = v > 0 ? (rising ? '#26a69a' : '#b2dfdb') : (rising ? '#ffcdd2' : '#ff5252');
  rect(x(k) - 1, v > 0 ? 374 - h : 373, 3, h, f);
});
line(macd, 257, '#2f9bf4');
line(signal, 257, '#f5791f');
line(slowMA, -13, '#3fcfd8');
line(fastMA, -13, '#4a9ff0');
candles.forEach(({ c, v }, k) => {
  const f = c === 'g' ? '#11ad98' : '#fa5252';
  if (v.length > 2) rect(x(k), y(v[2]), 1, y(v[3]) - y(v[2]), f);
  rect(x(k) - 1, y(v[0]), 3, y(v[1]) - y(v[0]), f);
});
out.push('<path d="M0 146.5H1161" stroke="#11ad98" stroke-dasharray="1 2"/>');
['0.097000', '0.096500', '0.096000', '0.095500', '0.095000', '0.094500', '0.094000', '0.093500', '0.093000']
  .forEach((s, i) => text(1169, Math.round(5 + 32.6 * i), s));
text(1169, 290, '400K');
text(1169, 378, '0.000000');
out.push('<rect x="1161" y="138" width="62" height="17" rx="1" fill="#11ad98"/>');
text(1169, 151, '0.094780', 'tag');
out.push('<svg x="1189" y="406" width="16" height="16" color="#2b2e35"><use href="#nut"/></svg>');
el('chart').innerHTML = out.join('');
```
